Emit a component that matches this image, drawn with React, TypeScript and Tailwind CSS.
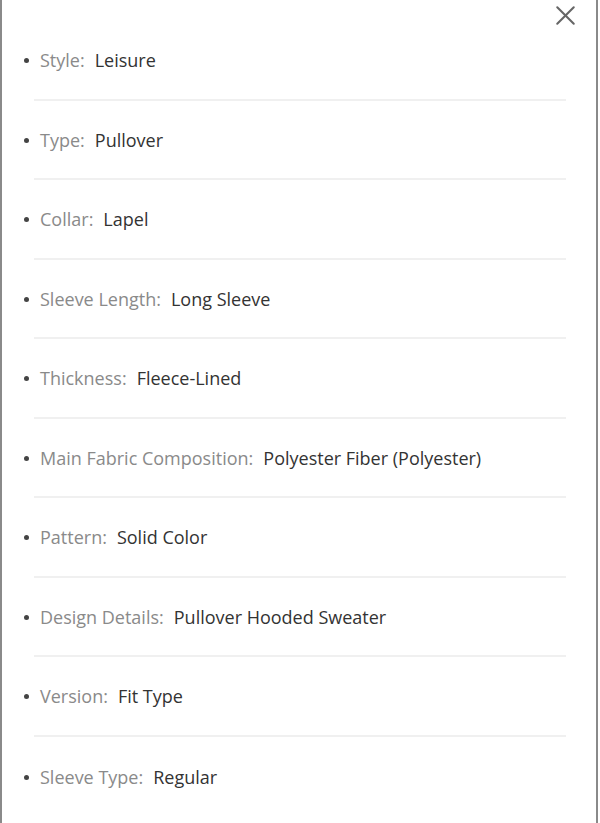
import React from "react";
import { X } from "lucide-react";

const specs: [string, string][] = [
  ["Style", "Leisure"],
  ["Type", "Pullover"],
  ["Collar", "Lapel"],
  ["Sleeve Length", "Long Sleeve"],
  ["Thickness", "Fleece-Lined"],
  ["Main Fabric Composition", "Polyester Fiber (Polyester)"],
  ["Pattern", "Solid Color"],
  ["Design Details", "Pullover Hooded Sweater"],
  ["Version", "Fit Type"],
  ["Sleeve Type", "Regular"],
];

export default function App() {
  return (
    <div className="w-[600px] h-[823px] bg-white overflow-hidden">
      <div
        className="relative w-[598px] h-full border-l-2 border-r-2 border-[#8a8a8a] bg-white pt-[21px]"
        style={{ fontFamily: "'Open Sans', Lato, sans-serif" }}
      >
        <button className="absolute left-[547px] top-[-1px] text-[#666]">
          <X size={33} strokeWidth={1.5} />
        </button>
        <ul>
          {specs.map(([k, v], i) => (
            <li key={k} className="h-[79.5px] flex flex-col">
              <div className="flex-1 flex items-center pl-[22px] text-[18px] pt-[2px]">
                <span className="w-[5px] h-[5px] mr-[11px] rounded-full bg-[#444]" />
                <span className="text-[#8a8a8a]">{k}:</span>
                <span className="ml-[10px] text-[#333] font-medium">{v}</span>
              </div>
              {i < specs.length - 1 && (
                <div className="ml-[32px] mr-[30px] h-[2px] bg-[#f0f0f0]" />
              )}
            </li>
          ))}
        </ul>
      </div>
    </div>
  );
}
